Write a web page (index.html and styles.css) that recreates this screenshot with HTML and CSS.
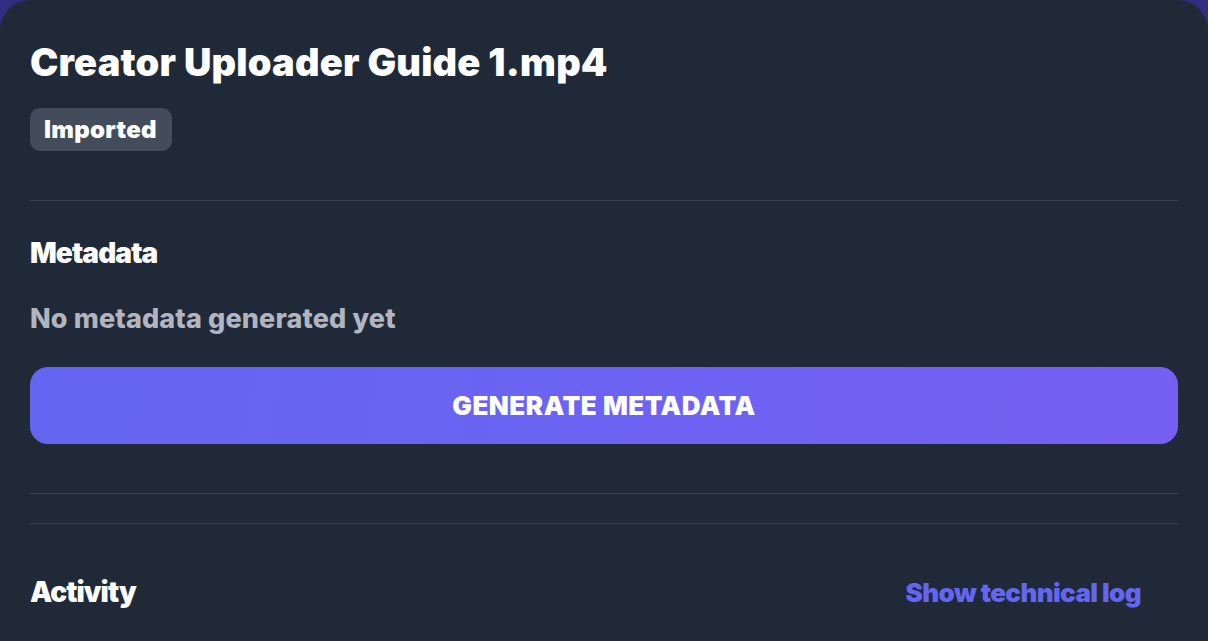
FILE: index.html
```html
<!DOCTYPE html>
<html>
  <head>
    <title>Creator Uploader Guide 1.mp4</title>
    <link rel="stylesheet" href="styles.css">
  </head>
  <body>
    <div class="card">
      <h1 class="title">Creator Uploader Guide 1.mp4</h1>
      <span class="badge">Imported</span>

      <hr class="divider">

      <!-- metadata section -->
      <div class="section">
        <h3 class="section-title">Metadata</h3>
        <p class="empty">No metadata generated yet</p>
        <button class="btn">GENERATE METADATA</button>
      </div>

      <hr class="divider gap-top">
      <hr class="divider">

      <!-- activity -->
      <div class="activity-head">
        <h3 class="section-title">Activity</h3>
        <a href="#" class="log-link">Show technical log</a>
      </div>
    </div>
  </body>
</html>
```

FILE: styles.css
```css
*{
    margin: 0;
    padding: 0;
    box-sizing: border-box;
}
body{
    background-color: #312e81;
    font-family: Inter, "Noto Sans", sans-serif;
    height: 641px;
    overflow: hidden;
}
.card{
    background-color: #1f2937;
    border-radius: 30px 30px 0 0;
    padding: 40px 30px 0 30px;
    min-height: 641px;
}
.title{
    color: white;
    font-size: 38px;
    font-weight: 900;
    letter-spacing: 0.2px;
    line-height: 44px;
}
.badge{
    display: inline-block;
    margin-top: 24px;
    background-color: #434c5a;
    color: white;
    font-size: 24px;
    font-weight: 900;
    letter-spacing: 0.3px;
    padding: 6px 15px 6px 14px;
    border-radius: 10px;
    line-height: 31px;
}
.divider{
    border: none;
    border-top: 1px solid #374151;
    margin-top: 49px;
}
.divider + .divider{
    margin-top: 29px;
}
.section{
    padding-top: 36px;
}
.section-title{
    color: white;
    font-size: 28px;
    font-weight: 900;
    letter-spacing: -0.9px;
    line-height: 32px;
}
.empty{
    margin-top: 34px;
    color: #b1b5bf;
    font-size: 27px;
    font-weight: 800;
    letter-spacing: 0.15px;
    line-height: 32px;
}
.btn{
    display: block;
    width: 100%;
    margin-top: 32px;
    height: 77px;
    border: none;
    border-radius: 18px;
    background: linear-gradient(100deg, #6366f1, #7660f3);
    color: white;
    font-family: Inter, sans-serif;
    font-size: 26px;
    font-weight: 900;
    letter-spacing: 0.5px;
}
.activity-head{
    display: flex;
    justify-content: space-between;
    align-items: center;
    padding-top: 52px;
    padding-right: 37px;
}
.log-link{
    color: #6366f1;
    font-size: 26px;
    font-weight: 900;
    letter-spacing: -0.6px;
    text-decoration: none;
}
```
